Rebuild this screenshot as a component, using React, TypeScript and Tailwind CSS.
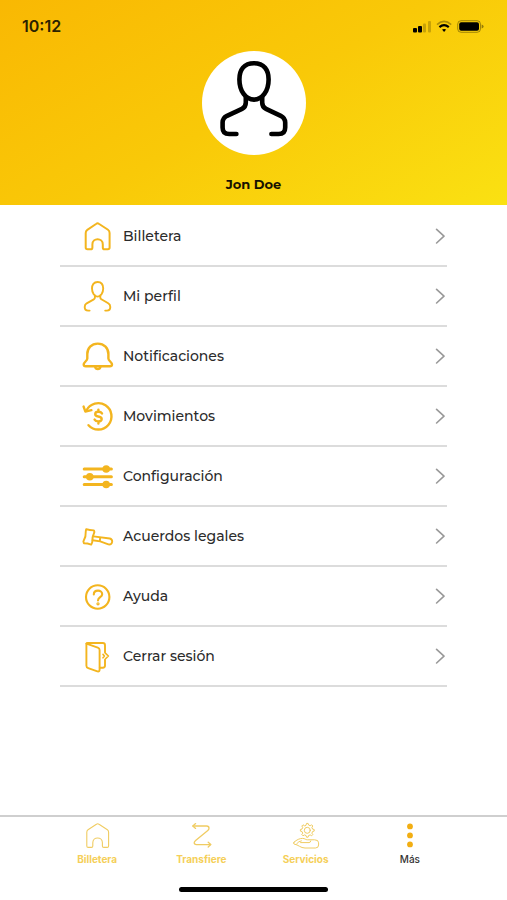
import React from 'react';

const stroke = {
  fill: 'none',
  stroke: 'currentColor',
  strokeLinecap: 'round' as const,
  strokeLinejoin: 'round' as const,
};

const menu = [
  {
    label: 'Billetera',
    icon: (
      <path
        strokeWidth="2"
        d="M18.5 5.3 Q18 5.3 17 6 L8.3 11.8 Q6.7 12.9 6.7 15 V29.5 Q6.7 31.3 8.5 31.3 H11.5 Q13.4 31.3 13.4 29.4 V26.5 C13.4 19.6 23.8 19.6 23.8 26.5 V29.4 Q23.8 31.3 25.7 31.3 H28.8 Q30.6 31.3 30.6 29.5 V15 Q30.6 12.9 29 11.8 L20.2 6 Q19.2 5.3 18.5 5.3 Z"
      />
    ),
  },
  {
    label: 'Mi perfil',
    icon: (
      <g strokeWidth="1.9">
        <path d="M18.6 4 C14.8 4 13 6.8 13 10.6 C13 15 15.6 18.6 18.6 18.6 C21.6 18.6 24.2 15 24.2 10.6 C24.2 6.8 22.4 4 18.6 4 Z" />
        <path d="M15.9 17.5 V19.5 Q15.9 20.8 14.8 21.3 L7.7 25.3 Q5.7 26.5 5.7 29 Q5.7 32.6 9.2 32.6 H10.6 M21.3 17.5 V19.5 Q21.3 20.8 22.4 21.3 L29.2 25.3 Q31.3 26.5 31.3 29 Q31.3 32.6 27.8 32.6 H26.2" />
      </g>
    ),
  },
  {
    label: 'Notificaciones',
    icon: (
      <g strokeWidth="2.4">
        <path d="M18.8 5.6 C12.3 5.6 8.3 10.3 8.3 16 V20.5 C8.3 23 4.7 24 4.7 26.5 Q4.7 28.3 6.8 28.3 H30.8 Q33 28.3 33 26.5 C33 24 29.4 23 29.4 20.5 V16 C29.4 10.3 25.3 5.6 18.8 5.6 Z" />
        <path d="M16.2 29 Q16.6 31 18.8 31 Q21 31 21.4 29" />
      </g>
    ),
  },
  {
    label: 'Movimientos',
    icon: (
      <g strokeWidth="2.4">
        <path d="M7.4 12.6 A13.2 13.2 0 1 1 9.5 27.2" />
        <path d="M4.6 8.6 L6.4 13.6 L12.4 12.2" />
        <path d="M23 15.4 Q22 13.8 19.4 13.8 C15.2 13.8 15.2 18.2 19.2 18.5 C23.8 18.9 23.8 23.4 19.4 23.4 Q16.6 23.4 15.6 21.6 M19.4 11.6 V13.6 M19.4 23.6 V25.6" />
      </g>
    ),
  },
  {
    label: 'Configuración',
    icon: (
      <g strokeWidth="3">
        <path d="M5.2 11 H32.4 M5.2 18.7 H32.4 M5.2 26.5 H32.4" />
        <g fill="currentColor" stroke="none">
          <circle cx="27.2" cy="11" r="3.8" />
          <circle cx="10.8" cy="18.7" r="3.8" />
          <circle cx="27.2" cy="26.5" r="3.8" />
        </g>
      </g>
    ),
  },
  {
    label: 'Acuerdos legales',
    icon: (
      <g strokeWidth="1.9">
        <path d="M7.2 11.2 Q10.6 12.4 14.9 12.4 L15.4 14 Q13 19 13.2 24.4 L12.2 26.6 Q8.5 25.2 4.9 25.2 L4.4 23.4 Q7.2 18.4 6.8 13 Z" />
        <path d="M14.4 18.4 L30.8 20.5 Q33.2 21.2 33.2 23.6 Q32.8 27 29.4 26.4 L21.2 23.4 L13.6 22.2" />
        <path d="M21.2 20 L20.8 23" />
      </g>
    ),
  },
  {
    label: 'Ayuda',
    icon: (
      <g strokeWidth="2.1">
        <circle cx="18.7" cy="19" r="11.7" />
        <path d="M14.8 16.4 C14.8 11.4 23.2 11.4 23.2 16.2 C23.2 19.2 19 19.2 19 22.4" />
        <circle cx="19" cy="25.8" r="0.6" />
      </g>
    ),
  },
  {
    label: 'Cerrar sesión',
    icon: (
      <g strokeWidth="1.9">
        <path d="M7.4 5.6 Q7.6 5 8.6 5 H23.8 Q26 5 26 7.2 V14.6 M26 21.6 V27.6 Q26 29.8 23.8 29.8 H20.8" />
        <path d="M7.4 5.6 L18.8 9.6 Q20.6 10.3 20.6 12 V31.6 Q20.6 34 18.4 33.4 L9.2 30.2 Q7.4 29.6 7.4 27.8 Z" />
        <path strokeWidth="1.6" d="M24 16.4 L25.4 18 L24 19.8 M26.6 15.4 L29.4 18 L26.6 20.8" />
      </g>
    ),
  },
];

const tabs = [
  {
    label: 'Billetera',
    icon: (
      <path d="M14.7 1.7 Q14.2 1.7 13.4 2.3 L5 7.8 Q3.8 8.6 3.8 10.2 V24 Q3.8 25.4 5.2 25.4 H8.4 Q9.8 25.4 9.8 24 V20.8 C9.8 14.4 19.4 14.4 19.4 20.8 V24 Q19.4 25.4 20.8 25.4 H24.2 Q25.6 25.4 25.6 24 V10.2 Q25.6 8.6 24.4 7.8 L16 2.3 Q15.2 1.7 14.7 1.7 Z" />
    ),
  },
  {
    label: 'Transfiere',
    icon: (
      <g strokeWidth="1.3">
        <path d="M6 4 H19.6 Q22 4 22 6.2 Q22 7.4 20.8 8.4 L8.6 18.4 Q7.2 19.6 7.2 20.8 Q7.2 22.6 9.4 22.6 H23.6" />
        <path d="M8.6 1.6 L5.8 4 L8.6 6.4 M21.2 20.2 L23.8 22.6 L21.2 25" />
      </g>
    ),
  },
  {
    label: 'Servicios',
    icon: (
      <g strokeWidth="1">
        <path d="M14.1 3 L14.5 1.4 H16.1 L16.5 3 L18.2 3.7 L19.6 2.8 L20.8 4 L19.9 5.4 L20.6 7.1 L22.2 7.5 V9.1 L20.6 9.5 L19.9 11.2 L20.8 12.6 L19.6 13.8 L18.2 12.9 L16.5 13.6 L16.1 15.2 H14.5 L14.1 13.6 L12.4 12.9 L11 13.8 L9.8 12.6 L10.7 11.2 L10 9.5 L8.4 9.1 V7.5 L10 7.1 L10.7 5.4 L9.8 4 L11 2.8 L12.4 3.7 Z" />
        <circle cx="15.3" cy="8.3" r="3" />
        <path d="M2 20.2 C5 17.6 7.6 16.4 10.6 16.4 C13 16.4 13.4 17.8 15.6 17.8 H22.6 Q26.6 17.8 26.6 20.8 V23 Q26.6 26 23.4 26 H13 C8.4 26 6.6 22.8 2 22 Q1 21.2 2 20.2 Z M8.6 20.6 H17 Q18.8 20.4 18.8 19 M4.6 21.8 Q6.6 19.2 9.4 18.8" />
      </g>
    ),
  },
  {
    label: 'Más',
    active: true,
    icon: (
      <g fill="currentColor" stroke="none">
        <circle cx="14" cy="4.4" r="2.9" />
        <circle cx="14" cy="13.4" r="2.9" />
        <circle cx="14" cy="22.4" r="2.9" />
      </g>
    ),
  },
];

function StatusBar() {
  return (
    <div className="flex items-center justify-between pt-4 pl-[22px] pr-[23px]">
      <span className="font-['Inter',sans-serif] text-base leading-5 font-semibold text-[#2b2200]">10:12</span>
      <div className="flex items-center gap-[5px] text-black">
        <svg width="19" height="13" viewBox="0 0 19 13" fill="currentColor" aria-hidden="true">
          <rect x="1" y="8" width="4" height="4.6" rx="1" />
          <rect x="6" y="6" width="4" height="6.6" rx="1" />
          <rect x="11" y="3.4" width="3" height="9.2" rx="1" opacity="0.2" />
          <rect x="16" y="1" width="3" height="11.6" rx="1" opacity="0.2" />
        </svg>
        <svg width="16" height="13" viewBox="0 0 16 13" fill="none" stroke="currentColor" aria-hidden="true">
          <path d="M1 4.6 Q8 -1.8 15.2 4.6" strokeWidth="1.6" opacity="0.3" />
          <path d="M3.4 7.2 Q8 3.2 12.8 7.2" strokeWidth="2.2" />
          <path d="M6 9.6 Q8.1 8.2 10.2 9.6 L8.1 12 Z" fill="currentColor" stroke="none" />
        </svg>
        <svg width="27" height="13" viewBox="0 0 27 13" aria-hidden="true">
          <rect x="0.7" y="0.7" width="22.8" height="11.6" rx="3.4" fill="none" stroke="currentColor" opacity="0.35" />
          <rect x="2.2" y="2.2" width="19.8" height="8.6" rx="2" fill="currentColor" />
          <path d="M24.6 4.4 Q26.6 5 26.6 6.5 Q26.6 8 24.6 8.6 Z" fill="currentColor" opacity="0.4" />
        </svg>
      </div>
    </div>
  );
}

function Avatar() {
  return (
    <div className="size-[104px] rounded-full bg-white text-black">
      <svg viewBox="0 0 104 104" {...stroke} strokeWidth="4.6" aria-hidden="true">
        <path d="M52 12.2 C42 12.2 37.4 19 37.4 28.4 C37.4 40 43.8 48.6 52 48.6 C60.2 48.6 66.6 40 66.6 28.4 C66.6 19 62 12.2 52 12.2 Z" />
        <path d="M43.8 46.5 V51.5 Q43.8 56 40 57.8 L25 64.8 Q20.6 67 20.6 71.6 V76.4 Q20.6 83 27.2 83 H34.4 M60.2 46.5 V51.5 Q60.2 56 64 57.8 L78.8 64.8 Q83.2 67 83.2 71.6 V76.4 Q83.2 83 76.6 83 H69.4" />
      </svg>
    </div>
  );
}

export default function App() {
  return (
    <div className="min-h-screen flex flex-col bg-white font-['Montserrat','Inter',sans-serif]">
      <header className="bg-linear-150 from-[#f9b803] via-[#f9c908] to-[#fae112]">
        <StatusBar />
        <div className="flex flex-col items-center pt-[15px] pb-[11px]">
          <Avatar />
          <h1 className="mt-[19px] text-[13px] leading-5 font-bold text-[#171200]">Jon Doe</h1>
        </div>
      </header>

      <main className="px-[60px] pt-0.5">
        <ul>
          {menu.map((item) => (
            <li key={item.label} className="border-b-2 border-[#dcdcdc]">
              <button
                type="button"
                className="flex w-full items-center gap-2 py-[11px] pl-[19px] pr-px text-left"
              >
                <svg className="size-9 shrink-0 text-[#f3b51f]" viewBox="0 0 36 36" {...stroke} aria-hidden="true">
                  {item.icon}
                </svg>
                <span className="flex-1 text-sm leading-5 font-medium text-[#2b2b2b]">{item.label}</span>
                <svg className="h-4 w-3 text-[#999]" viewBox="0 0 12 16" {...stroke} strokeWidth="1.6" aria-hidden="true">
                  <path d="M2.6 1.4 L10 8.2 L2.6 15" />
                </svg>
              </button>
            </li>
          ))}
        </ul>
      </main>

      <footer className="mt-auto border-t-2 border-[#cfcfcf] pt-[5px] pb-2">
        <nav className="grid grid-cols-4 px-[45px]">
          {tabs.map((tab) => (
            <a
              key={tab.label}
              href="#"
              className={`flex flex-col items-center gap-px font-['Inter',sans-serif] text-[10px] leading-4 ${
                tab.active ? 'font-medium text-[#333]' : 'font-bold text-[#f5cf58]'
              }`}
            >
              <svg
                className={`size-7 ${tab.active ? 'text-[#f2ae12]' : 'text-[#f0cc62]'}`}
                viewBox="0 0 28 28"
                {...stroke}
                strokeWidth="1.1"
                aria-hidden="true"
              >
                {tab.icon}
              </svg>
              {tab.label}
            </a>
          ))}
        </nav>
        <div className="mx-auto mt-5 h-[5px] w-[149px] rounded-full bg-black" />
      </footer>
    </div>
  );
}
